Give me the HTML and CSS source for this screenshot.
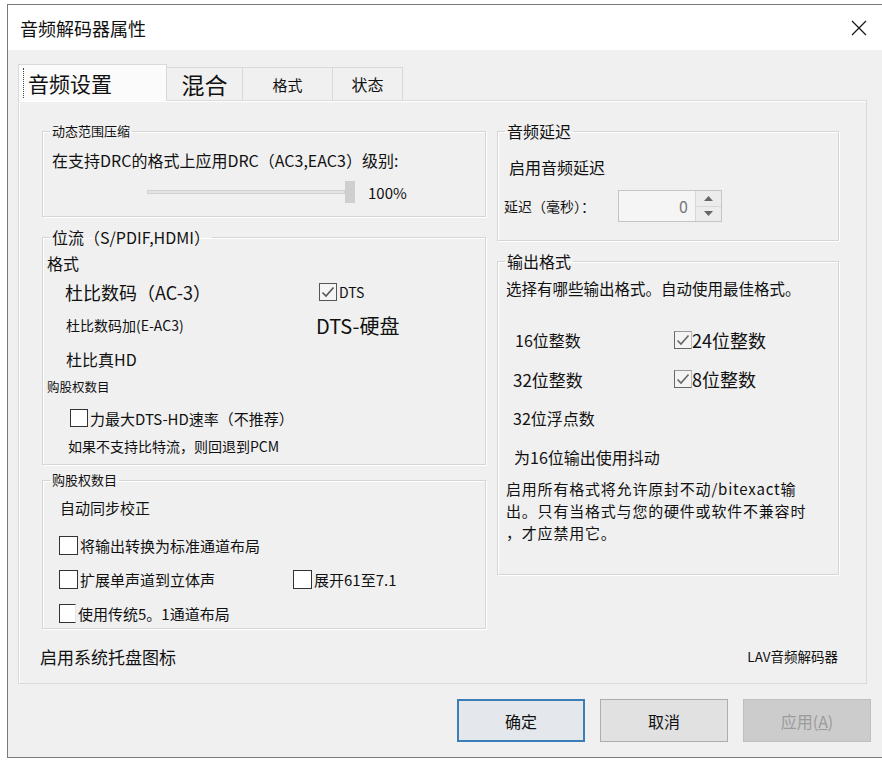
FILE: index.html
```html
<!DOCTYPE html>
<html lang="zh-CN">
<head>
    <meta charset="UTF-8">
    <title>音频解码器属性</title>
    <link rel="stylesheet" href="styles.css">
</head>
<body>

<div class="window">
    <div class="titlebar">
        <span class="title">音频解码器属性</span>
        <span class="close-btn">
            <svg width="16" height="16" viewBox="0 0 16 16"><path d="M1 1L15 15M15 1L1 15" stroke="#1a1a1a" stroke-width="1.3" fill="none"/></svg>
        </span>
    </div>

    <div class="dialog">
        <div class="tabs">
            <div class="tab active"><span class="focus">音频设置</span></div>
            <div class="tab tab-mix">混合</div>
            <div class="tab tab-fmt">格式</div>
            <div class="tab tab-state">状态</div>
        </div>

        <div class="panel">
            <div class="columns">
                <div class="col">
                    <fieldset class="group g-drc">
                        <legend class="lg-small">动态范围压缩</legend>
                        <div class="drc-text">在支持DRC的格式上应用DRC（AC3,EAC3）级别:</div>
                        <div class="slider-row">
                            <span class="track"></span>
                            <span class="thumb"></span>
                            <span class="pct">100%</span>
                        </div>
                    </fieldset>

                    <fieldset class="group g-bits">
                        <legend>位流（S/PDIF,HDMI）</legend>
                        <div class="sub-label">格式</div>
                        <div class="fmt-row r1">
                            <span>杜比数码（AC-3）</span>
                            <span class="opt"><span class="cb checked"><svg width="16" height="16" viewBox="0 0 16 16"><path d="M2.5 8.5L6 12L13.5 3.5" stroke="#555" stroke-width="1.6" fill="none"/></svg></span>DTS</span>
                        </div>
                        <div class="fmt-row r2">
                            <span>杜比数码加(E-AC3)</span>
                            <span class="dts-hd">DTS-硬盘</span>
                        </div>
                        <div class="fmt-row r3">
                            <span>杜比真HD</span>
                        </div>
                        <div class="small-label">购股权数目</div>
                        <div class="cb-row max-rate"><span class="cb"></span>力最大DTS-HD速率（不推荐）</div>
                        <div class="note">如果不支持比特流，则回退到PCM</div>
                    </fieldset>

                    <fieldset class="group g-mix">
                        <legend class="lg-small">购股权数目</legend>
                        <div class="auto-sync">自动同步校正</div>
                        <div class="mix-row first"><span class="opt"><span class="cb"></span>将输出转换为标准通道布局</span></div>
                        <div class="mix-row two">
                            <span class="opt"><span class="cb"></span>扩展单声道到立体声</span>
                            <span class="opt"><span class="cb"></span>展开61至7.1</span>
                        </div>
                        <div class="mix-row"><span class="opt"><span class="cb cut"></span>使用传统5。1通道布局</span></div>
                    </fieldset>
                </div>

                <div class="col">
                    <fieldset class="group g-delay">
                        <legend>音频延迟</legend>
                        <div class="delay-enable">启用音频延迟</div>
                        <div class="delay-row">
                            <span class="delay-label">延迟（毫秒）：</span>
                            <span class="spin">
                                <span class="spin-value">0</span>
                                <span class="spin-btns">
                                    <span class="spin-up"><svg width="9" height="5" viewBox="0 0 9 5"><path d="M0 5L4.5 0L9 5Z" fill="#666"/></svg></span>
                                    <span class="spin-down"><svg width="9" height="5" viewBox="0 0 9 5"><path d="M0 0L4.5 5L9 0Z" fill="#666"/></svg></span>
                                </span>
                            </span>
                        </div>
                    </fieldset>

                    <fieldset class="group g-out">
                        <legend>输出格式</legend>
                        <div class="out-desc">选择有哪些输出格式。自动使用最佳格式。</div>
                        <div class="bits">
                            <span class="b16">16位整数</span>
                            <span class="opt big"><span class="cb checked"><svg width="16" height="16" viewBox="0 0 16 16"><path d="M2.5 8.5L6 12L13.5 3.5" stroke="#666" stroke-width="1.6" fill="none"/></svg></span>24位整数</span>
                            <span class="b32">32位整数</span>
                            <span class="opt big"><span class="cb checked"><svg width="16" height="16" viewBox="0 0 16 16"><path d="M2.5 8.5L6 12L13.5 3.5" stroke="#666" stroke-width="1.6" fill="none"/></svg></span>8位整数</span>
                            <span class="b32f">32位浮点数</span>
                            <span></span>
                            <span class="dither">为16位输出使用抖动</span>
                        </div>
                        <p class="out-note">启用所有格式将允许原封不动/bitexact输<br>出。只有当格式与您的硬件或软件不兼容时<br>，才应禁用它。</p>
                    </fieldset>
                </div>
            </div>

            <div class="panel-foot">
                <span class="tray">启用系统托盘图标</span>
                <span class="brand">LAV音频解码器</span>
            </div>
        </div>

        <div class="buttons">
            <button class="btn btn-ok">确定</button>
            <button class="btn">取消</button>
            <button class="btn btn-disabled">应用(<u>A</u>)</button>
        </div>
    </div>
</div>

</body>
</html>
```

FILE: styles.css
```css
html, body {
    margin: 0;
    background-color: #fff;
}

body {
    font-family: "Noto Sans CJK SC", "Noto Sans", sans-serif;
    color: #111;
    overflow: hidden;
}

.window {
    margin: 4px 0 0 7px;
    width: 875px;
    border-top: 1px solid #7a7a7a;
    border-left: 1px solid #7a7a7a;
    border-bottom: 1px solid #7a7a7a;
}

.titlebar {
    height: 45px;
    background-color: #fff;
    display: flex;
    align-items: center;
    justify-content: space-between;
    padding: 0 16px 0 12px;
}

.title {
    font-size: 18px;
    line-height: 24px;
}

.close-btn {
    display: flex;
}

.dialog {
    height: 707px;
    box-sizing: border-box;
    background-color: #f0f0f0;
    padding: 14px 0 0 10px;
}

/* tabs */
.tabs {
    display: flex;
    align-items: flex-end;
    height: 36px;
}

.tab {
    box-sizing: border-box;
    height: 33px;
    border: 1px solid #d9d9d9;
    border-bottom: none;
    background-color: #f0f0f0;
    display: flex;
    align-items: center;
    justify-content: center;
}

.tab.active {
    position: relative;
    width: 149px;
    height: 37px;
    margin-bottom: -1px;
    background-color: #fbfbfb;
    justify-content: flex-start;
    padding-left: 4px;
}

.focus {
    font-size: 21px;
    line-height: 30px;
    border-left: 1px dotted #444;
    padding-left: 4px;
}

.tab-mix {
    width: 76px;
    font-size: 23px;
    border-left: none;
}

.tab-fmt {
    width: 90px;
    font-size: 15px;
    border-left: none;
}

.tab-state {
    width: 70px;
    font-size: 16px;
    border-left: none;
}

/* panel */
.panel {
    width: 849px;
    height: 584px;
    box-sizing: border-box;
    border: 1px solid #dadada;
    box-shadow: inset 1px 1px 0 #fff;
    padding: 20px 0 0 23px;
}

.columns {
    display: grid;
    grid-template-columns: 444px 342px;
    column-gap: 11px;
    align-items: start;
}

.col {
    display: flex;
    flex-direction: column;
}

.group {
    margin: 0;
    padding: 0;
    min-width: 0;
    border: 1px solid #d5d5d5;
    box-shadow: 1px 1px 0 #fff, inset 1px 1px 0 #fff;
}

.group legend {
    margin-left: 7px;
    padding: 0 2px;
    font-size: 16px;
    line-height: 20px;
}

.group legend.lg-small {
    font-size: 13px;
}

/* dynamic range */
.g-drc {
    padding-bottom: 6px;
}

.drc-text {
    margin-top: 5px;
    height: 28px;
    line-height: 28px;
    font-size: 16px;
    padding-left: 9px;
}

.slider-row {
    height: 36px;
    display: flex;
    align-items: center;
    padding-left: 104px;
}

.track {
    width: 198px;
    height: 4px;
    background-color: #e2e2e2;
    border: 1px solid #d2d2d2;
    box-sizing: border-box;
}

.thumb {
    width: 10px;
    height: 22px;
    background-color: #cfcfcf;
}

.pct {
    margin-left: 13px;
    font-size: 15px;
}

/* bitstream */
.g-bits {
    margin-top: 10px;
    padding-bottom: 4px;
}

.sub-label {
    margin-top: 5px;
    height: 22px;
    line-height: 22px;
    font-size: 16px;
    padding-left: 4px;
}

.fmt-row {
    display: grid;
    grid-template-columns: 254px 1fr;
    align-items: center;
    padding-left: 22px;
}

.r1 {
    height: 36px;
    font-size: 18px;
}

.r2 {
    height: 30px;
    font-size: 14px;
    padding-left: 23px;
}

.r3 {
    height: 38px;
    font-size: 16px;
    padding-left: 23px;
}

.opt {
    display: flex;
    align-items: center;
}

.r1 .opt {
    font-size: 14px;
}

.dts-hd {
    font-size: 20px;
    margin-left: -4px;
}

.small-label {
    height: 18px;
    line-height: 18px;
    font-size: 12.5px;
    padding-left: 4px;
}

.cb {
    box-sizing: border-box;
    width: 18px;
    height: 18px;
    border: 1px solid #333;
    background-color: #fff;
    margin-right: 2px;
    display: inline-flex;
    align-items: center;
    justify-content: center;
    flex-shrink: 0;
}

.cb.checked {
    border-color: #555;
    background-color: #f4f4f4;
}

.cb.cut {
    width: 16px;
    border-right-color: #e6e6e6;
}

.cb-row {
    display: flex;
    align-items: center;
}

.max-rate {
    margin-top: 8px;
    height: 28px;
    font-size: 15px;
    padding-left: 27px;
}

.note {
    height: 28px;
    line-height: 28px;
    font-size: 14px;
    padding-left: 25px;
}

/* mixing */
.g-mix {
    margin-top: 5px;
    padding-bottom: 3px;
}

.auto-sync {
    margin-top: 4px;
    height: 28px;
    line-height: 28px;
    font-size: 15px;
    padding-left: 17px;
}

.mix-row {
    margin-top: 10px;
    height: 24px;
    font-size: 15px;
    padding-left: 16px;
    display: grid;
    grid-template-columns: 234px 1fr;
    align-items: center;
}

.mix-row.first {
    margin-top: 11px;
    grid-template-columns: 1fr;
}

.mix-row .cb {
    width: 19px;
    height: 19px;
    margin-right: 2px;
}

.mix-row .cb.cut {
    width: 17px;
}

/* right column */
.g-delay {
    padding-bottom: 17px;
}

.delay-enable {
    margin-top: 12px;
    height: 28px;
    line-height: 28px;
    font-size: 16px;
    padding-left: 11px;
}

.delay-row {
    margin-top: 8px;
    height: 34px;
    display: flex;
    align-items: center;
    padding-left: 6px;
}

.delay-label {
    width: 114px;
    font-size: 14px;
}

.spin {
    box-sizing: border-box;
    width: 104px;
    height: 32px;
    border: 1px solid #c4c4c4;
    background-color: #f5f5f5;
    display: flex;
}

.spin-value {
    flex: 1;
    text-align: right;
    padding-right: 7px;
    font-size: 16px;
    line-height: 30px;
    color: #777;
}

.spin-btns {
    width: 25px;
    display: flex;
    flex-direction: column;
    border-left: 1px solid #d8d8d8;
}

.spin-up, .spin-down {
    flex: 1;
    display: flex;
    align-items: center;
    justify-content: center;
    background-color: #ececec;
}

.spin-up {
    border-bottom: 1px solid #d8d8d8;
}

.g-out {
    margin-top: 10px;
    padding-bottom: 30px;
}

.out-desc {
    margin-top: 4px;
    height: 26px;
    line-height: 26px;
    font-size: 15.5px;
    padding-left: 8px;
}

.bits {
    margin-top: 25px;
    display: grid;
    grid-template-columns: 161px 1fr;
    grid-auto-rows: 28px;
    row-gap: 11px;
    align-items: center;
    padding-left: 15px;
}

.b16 {
    font-size: 16px;
    padding-left: 2px;
}

.b32 {
    font-size: 17px;
}

.b32f {
    font-size: 16px;
}

.bits .big {
    font-size: 18px;
}

.bits .cb {
    margin-right: 0;
    border-color: #666;
    border-top-color: #999;
    border-right-color: #bbb;
}

.dither {
    grid-column: 1 / -1;
    font-size: 16px;
    padding-left: 1px;
}

.out-note {
    margin: 7px 0 0;
    padding-left: 8px;
    font-size: 15px;
    letter-spacing: 0.8px;
    line-height: 22px;
}

/* footer of panel */
.panel-foot {
    margin-top: 16px;
    height: 22px;
    display: flex;
    align-items: center;
    justify-content: space-between;
    padding: 0 28px 0 0;
    margin-left: -2px;
}

.tray {
    font-size: 17px;
}

.brand {
    font-size: 13.5px;
}

/* buttons */
.buttons {
    display: flex;
    justify-content: flex-end;
    gap: 15px;
    margin-top: 15px;
    padding-right: 12px;
}

.btn {
    box-sizing: border-box;
    width: 128px;
    height: 43px;
    font-family: inherit;
    font-size: 16px;
    color: #111;
    background-color: #e1e1e1;
    border: 1px solid #adadad;
    padding: 0;
}

.btn-ok {
    border: 2px solid #3c7fb8;
    background-color: #e4e8ec;
}

.btn-disabled {
    background-color: #cccccc;
    border-color: #bfbfbf;
    color: #9b9b9b;
}
```
